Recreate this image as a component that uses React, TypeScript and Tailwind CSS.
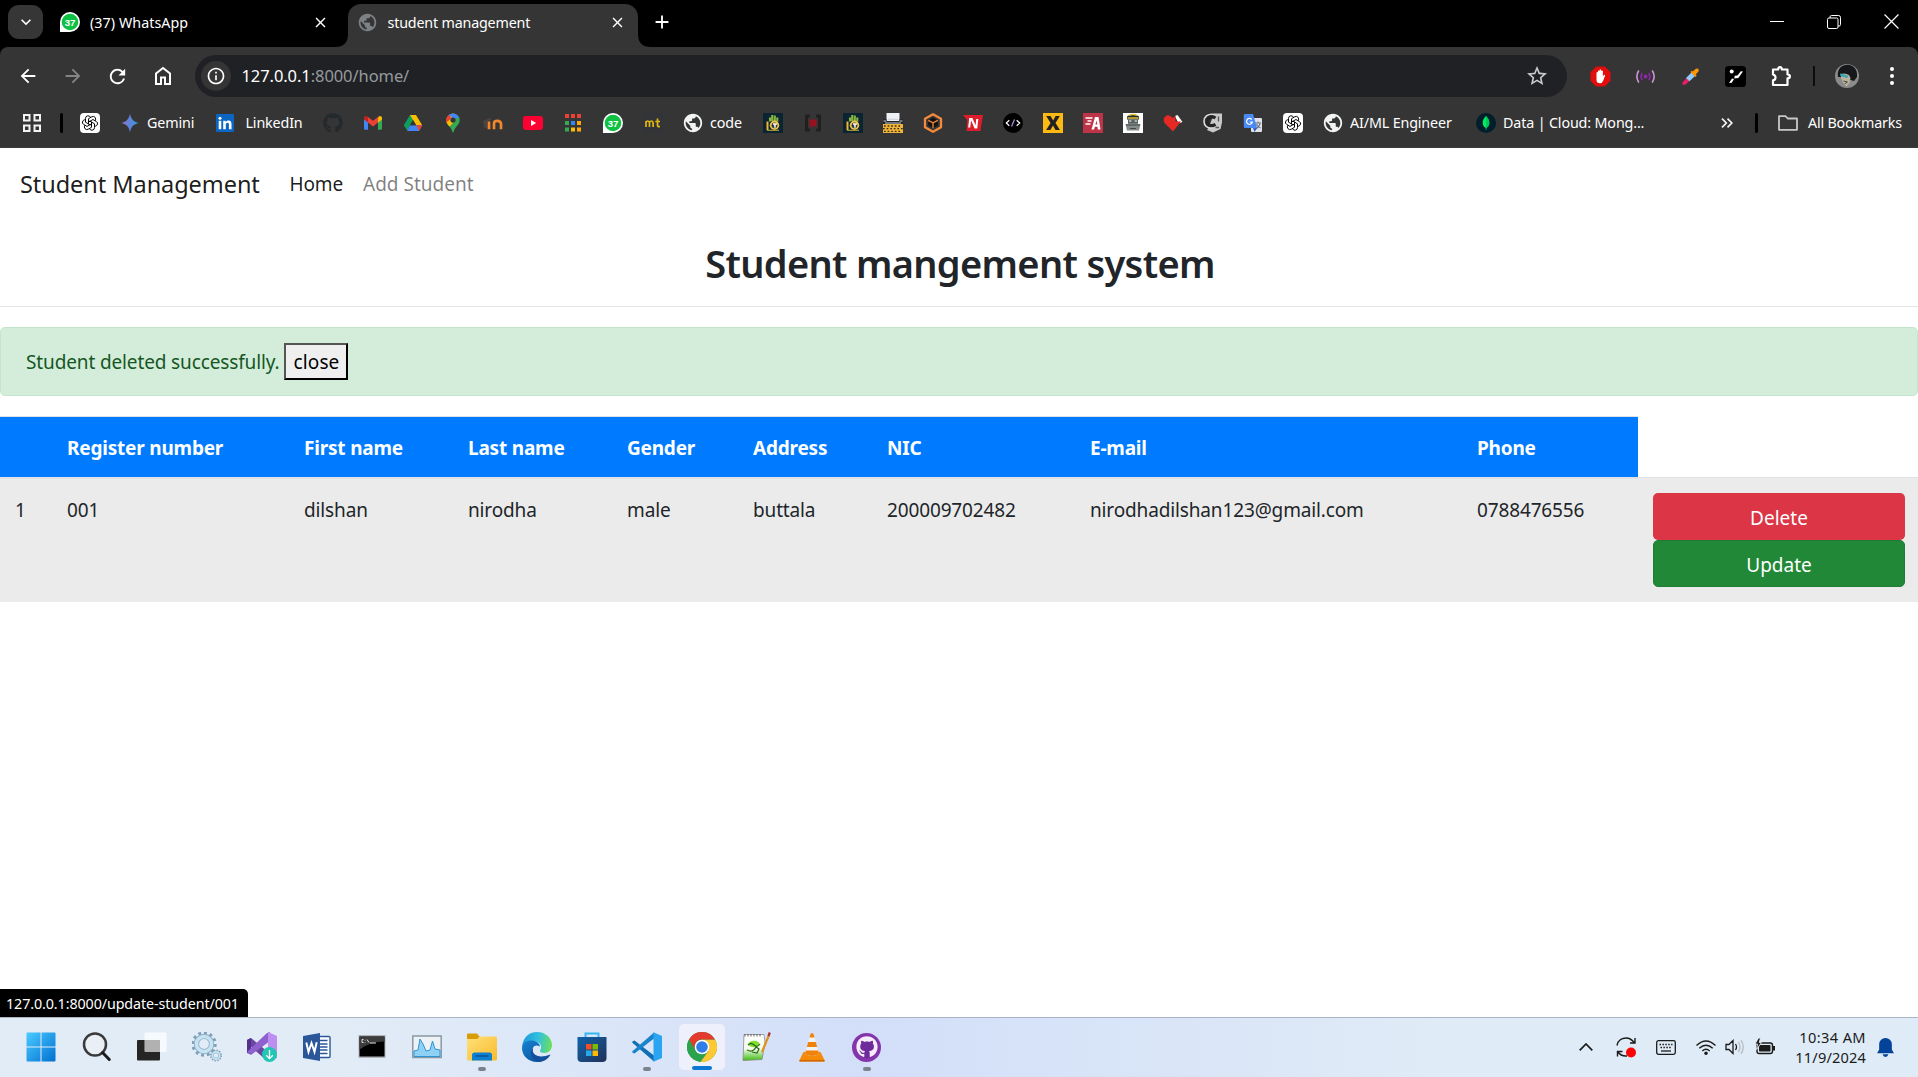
import type { ReactNode } from "react";
import { MdPublic, MdClose, MdAdd, MdArrowBack, MdArrowForward, MdRefresh, MdInfoOutline, MdStarOutline, MdExpandMore } from "react-icons/md";
import { TbBrandOpenai } from "react-icons/tb";
import { FaGithub } from "react-icons/fa";

/* ---------- favicons ---------- */

function WhatsAppBadge() {
  return (
    <svg viewBox="0 0 20 20" className="size-5 shrink-0">
      <path d="M0 20V10A10 10 0 1 1 10 20Z" fill="#fff" />
      <circle cx="10" cy="10" r="8.3" fill="#0fc143" />
      <text x="10" y="13.6" textAnchor="middle" fontSize="9.6" fontWeight="700" fill="#fff" fontFamily="Liberation Sans, sans-serif">37</text>
    </svg>
  );
}

function OpenAI() {
  return (
    <span className="flex size-5 shrink-0 items-center justify-center rounded bg-white text-black">
      <TbBrandOpenai size={18} className="stroke-[1.3]" />
    </span>
  );
}

function Gemini() {
  return (
    <svg viewBox="0 0 20 20" className="size-5 shrink-0">
      <defs>
        <linearGradient id="gem" x1="0" y1="0" x2="1" y2="0">
          <stop offset="0" stopColor="#9a72c4" />
          <stop offset=".5" stopColor="#5b84dc" />
          <stop offset="1" stopColor="#3a9bd8" />
        </linearGradient>
      </defs>
      <path d="M10 .6C10.900 6 13.500 9 18.800 10 13.500 11 10.900 14 10 19.400 9.100 14 6.500 11 1.200 10 6.500 9 9.100 6 10 .6Z" fill="url(#gem)" />
    </svg>
  );
}

function LinkedIn() {
  return (
    <svg viewBox="0 0 20 20" className="size-5 shrink-0">
      <rect x="1" y="1" width="18" height="18" rx="1.3" fill="#0a66c2" />
      <rect x="3.7" y="7.8" width="2.6" height="8.4" fill="#fff" />
      <circle cx="5" cy="5.2" r="1.5" fill="#fff" />
      <path d="M8.2 7.8h2.5V9c.5-.9 1.5-1.5 2.8-1.5 2.6 0 3 1.7 3 4v4.7h-2.6V12c0-1.1 0-2.3-1.4-2.3s-1.7 1.1-1.7 2.3v4.2H8.2Z" fill="#fff" />
    </svg>
  );
}

function Gmail() {
  return (
    <svg viewBox="0 0 20 20" className="size-5 shrink-0">
      <path d="M1 5v10.5c0 .8.6 1.3 1.3 1.3H5V8.6Z" fill="#4285f4" />
      <path d="M15 8.6v8.2h2.7c.7 0 1.3-.5 1.3-1.3V5Z" fill="#34a853" />
      <path d="M15 5v4.6l4-3V5c0-2-2.200-2.700-3.400-1.600Z" fill="#fbbc04" />
      <path d="M5 9.600V4l5 3.800L15 4v5.600l-5 3.800Z" fill="#ea4335" />
      <path d="M1 5v1.600l4 3V4l-.6-.6C3.200 2.300 1 3 1 5Z" fill="#c5221f" />
    </svg>
  );
}

function Drive() {
  return (
    <svg viewBox="0 0 20 20" className="size-5 shrink-0">
      <path d="M7 2h6L7.200 12 4.200 17.500.8 12.300Z" fill="#0f9d58" />
      <path d="M7 2h6l6.200 10.300h-6Z" fill="#fbbc04" />
      <path d="M7 12.300h12.200L16 18H4Z" fill="#4285f4" />
      <path d="M13.200 12.300h6L16 18Z" fill="#ea4335" />
      <path d="M10 7.200l3.100 5.100H7Z" fill="#353535" />
    </svg>
  );
}

function MapsPin() {
  return (
    <svg viewBox="0 0 20 20" className="size-5 shrink-0">
      <defs>
        <clipPath id="pin">
          <path d="M10 .5a6.700 6.700 0 0 1 6.700 6.700c0 3-1.900 4.500-3.600 6.700-1.300 1.700-1.900 3-2.400 4.900-.2.900-1.200.9-1.400 0-.5-1.900-1.100-3.200-2.400-4.900-1.700-2.200-3.600-3.700-3.600-6.700A6.700 6.700 0 0 1 10 .5Z" />
        </clipPath>
      </defs>
      <g clipPath="url(#pin)">
        <rect width="20" height="20" fill="#34a853" />
        <path d="M0 0h12L2 12H0Z" fill="#ea4335" />
        <path d="M6 0h14v4l-6 1-4 2-4-3Z" fill="#4285f4" />
        <path d="M1 11l7-8 3 6-6 6Z" fill="#fbbc04" />
        <path d="M1 2l4-1 3.500 4L3 10Z" fill="#ea4335" />
      </g>
      <circle cx="10" cy="7.100" r="2.600" fill="#353535" />
    </svg>
  );
}

function Moodle() {
  return (
    <svg viewBox="0 0 20 20" className="size-5 shrink-0">
      <path d="M0 8l6-3 3 1-5 3v6H1.500Z" fill="#4a4340" />
      <path d="M6 16.300V8.500M11 16.300V10.500Q11 7.800 14.300 7.800T18 10.500v5.800" fill="none" stroke="#f0872a" strokeWidth="2.700" />
    </svg>
  );
}

function YouTube() {
  return (
    <svg viewBox="0 0 20 20" className="size-5 shrink-0">
      <rect x="0" y="3" width="20" height="14" rx="3" fill="#ff0033" />
      <path d="M8 7l5.200 3L8 13Z" fill="#fff" />
    </svg>
  );
}

function NineDots() {
  return (
    <svg viewBox="0 0 20 20" className="size-5 shrink-0">
      <g fill="#ea4335"><rect x="2" y="1" width="4" height="4" /><rect x="8" y="1" width="4" height="4" /><rect x="14" y="1" width="4" height="4" /></g>
      <rect x="2" y="8" width="4" height="4" fill="#34a853" /><rect x="8" y="8" width="4" height="4" fill="#2f86f6" /><rect x="14" y="8" width="4" height="4" fill="#fbaa05" />
      <rect x="2" y="14.500" width="4" height="4" fill="#34a853" /><rect x="8" y="14.500" width="4" height="4" fill="#fbbc04" /><rect x="14" y="14.500" width="4" height="4" fill="#fbaa05" />
    </svg>
  );
}

function Monkeytype() {
  return (
    <svg viewBox="0 0 20 20" className="size-5 shrink-0">
      <rect width="20" height="20" rx="4" fill="#323437" />
      <path d="M3 14V8M3 9.500q.4-1.500 1.800-1.500T6.500 9.800V14M6.500 9.800q.3-1.800 1.900-1.800t1.700 1.800V14" fill="none" stroke="#e2b714" strokeWidth="1.700" />
      <path d="M14.500 5.500v6.700q0 1.700 2.500 1.300M12.300 8.500h4.700" fill="none" stroke="#e2b714" strokeWidth="1.700" />
    </svg>
  );
}

function CropHand() {
  return (
    <svg viewBox="0 0 20 20" className="size-5 shrink-0">
      <rect width="20" height="20" fill="#0b2434" />
      <path d="M7 8.500V4.500M9.200 8V2M11.800 8V2.500M14.300 8.500V4.500" stroke="#86b83f" strokeWidth="2.100" />
      <path d="M4.500 8.500v8.500" stroke="#f2b632" strokeWidth="2" />
      <circle cx="11.500" cy="12.300" r="4.700" fill="#f0c548" />
      <circle cx="11.500" cy="12.300" r="2.900" fill="#2c3f3c" />
      <path d="M10 10.300h4v1.400h-1.300v3h-1.500v-3H10Z" fill="#fff" />
      <path d="M4 17.300h12" stroke="#a9a438" strokeWidth="1.200" />
    </svg>
  );
}

function BracketSquare() {
  return (
    <svg viewBox="0 0 20 20" className="size-5 shrink-0">
      <path d="M7 3H3.500v14H7M13 3h3.500v14H13" fill="none" stroke="#202020" strokeWidth="3" />
      <rect x="6.500" y="6.500" width="7" height="7" fill="#96121f" />
    </svg>
  );
}

function Typewriter() {
  return (
    <svg viewBox="0 0 20 20" className="size-5 shrink-0">
      <path d="M3.500 0h13v8h-13Z" fill="#eef1f5" />
      <path d="M0 6.500h4V8h12V6.500h4V11H0Z" fill="#1d2027" />
      <path d="M.5 8h3M5 6.300h10M16.500 8h3M2 10h16" stroke="#c9ced6" strokeWidth="1.100" />
      <path d="M0 11h20v9H0Z" fill="#efb43a" />
      <path d="M1 13h18M0 15.700h20M1 18.400h18" stroke="#3c2c12" strokeWidth="1.300" strokeDasharray="1.700 1.900" />
    </svg>
  );
}

function BoxHex() {
  return (
    <svg viewBox="0 0 20 20" className="size-5 shrink-0">
      <path d="M10 1.200l8 4.500v8.600l-8 4.500-8-4.500V5.700Z" fill="#353535" stroke="#f58a3a" strokeWidth="2.300" strokeLinejoin="round" />
      <path d="M10 4.800l4.800 2.500v5.200L10 15.300l-4.800-2.800V7.300Z" fill="#141210" />
      <path d="M5.200 7.300L10 9.800l4.800-2.500M10 9.800v5.500" fill="none" stroke="#f58a3a" strokeWidth="1.300" />
    </svg>
  );
}

function RedN() {
  return (
    <svg viewBox="0 0 20 20" className="size-5 shrink-0">
      <path d="M0 2h20l-2.600 16H3.500l.8-11Z" fill="#dd1d2b" />
      <path d="M6.200 14.500L7.200 6h1.500l3.600 8.500h1L14.300 6" fill="none" stroke="#fff" strokeWidth="2.100" />
    </svg>
  );
}

function CodeCircle() {
  return (
    <svg viewBox="0 0 20 20" className="size-5 shrink-0">
      <circle cx="10" cy="10" r="10" fill="#000" />
      <path d="M6.300 7.300L3.300 10l3 2.700M13.700 7.300l3 2.700-3 2.700" fill="none" stroke="#fff" strokeWidth="1.200" />
      <path d="M11.500 6.500l-3 7" stroke="#b388eb" strokeWidth="1.200" />
    </svg>
  );
}

function YellowX() {
  return (
    <svg viewBox="0 0 20 20" className="size-5 shrink-0">
      <rect width="20" height="20" fill="#fcb813" />
      <path d="M3.200 3h4.300l2.700 4.500L12.600 3h4.200L12.500 10l4.400 7h-4.400L10 12.400 7.400 17H3.100l4.500-7Z" fill="#222" />
    </svg>
  );
}

function SpeedA() {
  return (
    <svg viewBox="0 0 20 20" className="size-5 shrink-0">
      <rect width="20" height="20" fill="#bd3448" />
      <path d="M2.500 5h7M4.500 8h4M2.500 11h5" stroke="#fff" strokeWidth="1.300" />
      <path d="M8.500 16.500L12 4h3.500l2 12.500h-2.700l-.3-2.800h-2.700l-.7 2.800Zm3.800-5h2l-.4-4Z" fill="#fff" fillRule="evenodd" />
    </svg>
  );
}

function HackerCat() {
  return (
    <svg viewBox="0 0 20 20" className="size-5 shrink-0">
      <rect width="20" height="20" fill="#fff" />
      <path d="M4 3.500q6-4.500 12 0v3H4Z" fill="#24282b" />
      <path d="M6 2.500q4-2 8 0M4.500 5h11" stroke="#e0c235" strokeWidth="1.300" fill="none" />
      <path d="M5 6.500h10v4.300H5Z" fill="#55605f" />
      <path d="M6 8h2.500M11.500 8H14" stroke="#fff" strokeWidth="1.200" />
      <path d="M2.500 11h15L16 17.500H4Z" fill="#858c8b" />
      <path d="M3 12h14M7 15.500h6" stroke="#424746" strokeWidth="1.200" />
    </svg>
  );
}

function HeartCard() {
  return (
    <svg viewBox="0 0 20 20" className="size-5 shrink-0">
      <path d="M12 3l2.500-1 5 7-4 1.500Z" fill="#fff" />
      <path d="M10 18.500L2 10.500C-1.500 6.500 3 0 7.500 3.200L10 5l2.500-2v5.500H18Z" fill="#e52a24" />
    </svg>
  );
}

function GrayC() {
  return (
    <svg viewBox="0 0 20 20" className="size-5 shrink-0">
      <path d="M11 .500h8v9L17.500 16 10 19.500l-6-2.500 2-3Z" fill="#c9c9c9" />
      <path d="M11.500 1.500C4 .5 1 4 1 8.500S4.500 15.500 10 15" fill="none" stroke="#dcdcdc" strokeWidth="1.600" />
      <path d="M12.500 5C8.500 2.500 4.300 4.500 4.300 8.700s4.400 5 8.200 2.600" fill="none" stroke="#252525" strokeWidth="3.200" />
      <path d="M15.500 3.500v5M12.500 14.500h3.500" stroke="#555" strokeWidth="1.300" />
    </svg>
  );
}

function Translate() {
  return (
    <svg viewBox="0 0 20 20" className="size-5 shrink-0">
      <rect x="8" y="5" width="11" height="14" rx="1" fill="#dfe3e8" />
      <path d="M12 10h6M15 8.500V10M17 10.500q-1 4-4.500 5M13.500 11q1 3 4 4" stroke="#6d7480" strokeWidth="1.100" fill="none" />
      <path d="M2 1h8l4.200 14H2q-1.200 0-1.200-1.200V2.200Q.8 1 2 1Z" fill="#4a8af4" />
      <path d="M10 15h4.200L11.500 19Z" fill="#3563c4" />
      <path d="M8.700 6.500A2.900 2.900 0 1 0 9.300 9H6.700" fill="none" stroke="#fff" strokeWidth="1.200" />
    </svg>
  );
}

function Mongo() {
  return (
    <svg viewBox="0 0 20 20" className="size-5 shrink-0">
      <circle cx="10" cy="10" r="10" fill="#001e2b" />
      <path d="M10 3c2.200 2.300 3.300 4.300 3.300 6.700 0 2.500-1.200 4.100-3 5.400L10.200 17h-.4l-.1-1.900c-1.800-1.300-3-2.900-3-5.400C6.700 7.300 7.800 5.300 10 3Z" fill="#00ed64" />
      <path d="M10 3v14h.2l.1-1.900c1.800-1.300 3-2.900 3-5.400C13.300 7.300 12.200 5.300 10 3Z" fill="#00c955" />
    </svg>
  );
}

const Globe = () => <MdPublic className="-mx-px size-[22px] shrink-0 text-[#f1f3f4]" />;

function Mark({ icon, label, box }: { icon: ReactNode; label?: string; box?: string }) {
  return (
    <div className={`flex h-5 shrink-0 items-center whitespace-nowrap text-[14.3px] tracking-[-0.14px] text-white ${box ?? "w-5"}`}>
      {icon}
      {label && <span className="pb-px">{label}</span>}
    </div>
  );
}

/* ---------- browser chrome ---------- */

function TabStrip() {
  return (
    <header className="flex h-[47px] shrink-0 items-start bg-black text-white">
      <div className="ml-2 mt-[5px] flex h-[34px] w-[35px] items-center justify-center rounded-[11px] bg-[#363636]">
        <MdExpandMore size={20} />
      </div>
      <div className="ml-[17px] flex h-11 w-[288px] items-center">
        <WhatsAppBadge />
        <span className="ml-2.5 flex-1 pt-px text-[14.3px] tracking-[0.05px]">(37) WhatsApp</span>
        <MdClose size={17} className="mr-[19px]" />
      </div>
      <svg viewBox="0 0 13 43" className="-ml-[13px] mt-1 h-[43px] w-[13px]"><path d="M13 30v13H0Q13 43 13 30Z" fill="#353535" /></svg>
      <div className="mt-1 flex h-[43px] w-[290px] items-center rounded-t-[13px] bg-[#353535] pb-[7px]">
        <MdPublic size={21} className="ml-[9px] text-[#7d8084]" />
        <span className="ml-[9.5px] flex-1 pt-px text-[14.3px] tracking-[-0.18px]">student management</span>
        <MdClose size={17} className="mr-3" />
      </div>
      <svg viewBox="0 0 13 43" className="mt-1 h-[43px] w-[13px]"><path d="M0 30v13h13Q0 43 0 30Z" fill="#353535" /></svg>
      <MdAdd size={22} className="mt-[11px]" />
      <div className="ml-auto mr-[19px] mt-[14px] flex items-center gap-[43px]">
        <svg viewBox="0 0 14 14" className="size-[14px]" stroke="#fff"><path d="M0 6.500h14" /></svg>
        <svg viewBox="0 0 14 14" className="size-[14px]" fill="none" stroke="#fff">
          <rect x=".5" y="3" width="10.500" height="10.500" rx="1.500" />
          <path d="M3 3V2Q3 .5 4.500.5h7Q13.500.5 13.500 2.500v7Q13.500 11 12 11h-1" />
        </svg>
        <svg viewBox="0 0 14 14" className="size-[15px]" stroke="#fff" strokeWidth="1.100"><path d="M.5.5l13 13M13.500.5l-13 13" /></svg>
      </div>
    </header>
  );
}

function Toolbar() {
  return (
    <div className="bg-black">
      <div className="flex h-[58px] items-center rounded-t-lg bg-[#353535] text-white">
        <div className="ml-[17px] flex w-[178px] items-center gap-[22.500px]">
          <MdArrowBack size={22} />
          <MdArrowForward size={22} className="text-[#858585]" />
          <MdRefresh size={23} />
          <svg viewBox="0 0 22 22" className="size-[22px]" fill="none" stroke="#fff" strokeWidth="2"><path d="M4 8.500L11 3l7 5.500V19h-5v-6.500H9V19H4Z" /></svg>
        </div>
        <div className="flex h-[42px] w-[1372px] items-center rounded-full bg-[#202124] pl-[6px]">
          <span className="flex size-[30px] items-center justify-center rounded-full bg-[#353535]"><MdInfoOutline size={20} /></span>
          <span className="ml-[10.500px] flex-1 pt-px text-[16.500px] tracking-[-0.08px] text-[#959a9f]"><span className="text-white">127.0.0.1</span>:8000/home/</span>
          <MdStarOutline size={24} className="mr-[18px] text-[#c9cbcd]" />
        </div>
        <div className="ml-[23px] flex items-center gap-[24px]">
          <svg viewBox="0 0 21 21" className="size-[21px]">
            <path d="M6.200.5h8.600l5.700 5.700v8.600l-5.700 5.700H6.200L.5 14.800V6.200Z" fill="#e40d0d" />
            <path d="M6.500 10V6.500q.7-.8 1.400 0V5q.8-.9 1.600 0V3.700q.9-.9 1.700 0V5q.9-.8 1.700.1v5.200l1-1.300q1.300-.5 1.200.6l-1.800 5q-1 2.700-3.300 2.700Q6.500 17.200 6.500 14Z" fill="#fff" />
          </svg>
          <svg viewBox="0 0 21 21" className="size-[21px]" fill="none" strokeWidth="1.600" strokeLinecap="round">
            <circle cx="10.500" cy="10.500" r="1.900" fill="#9427b0" />
            <path d="M7 7.500q-2 3 0 6M14 7.500q2 3 0 6" stroke="#8e24aa" />
            <path d="M3.500 5q-3.300 5.500 0 11M17.500 5q3.300 5.500 0 11" stroke="#ce93d8" />
          </svg>
          <svg viewBox="0 0 21 21" className="size-[21px]">
            <path d="M2.500 16.500l4-4.500 3 3-4 3.500-3 .5Z" fill="#e91e63" />
            <path d="M6 12l5.500-5.500 3.500 3.500-5.500 5.300Z" fill="#90caf9" />
            <path d="M10.500 6l1.300-1.300 1 .7L15.500 3Q18 1.700 18.800 4q.2 1-.6 1.700L15.700 8.500l1 1L15.500 11Z" fill="#ff9800" />
          </svg>
          <svg viewBox="0 0 21 21" className="size-[21px]">
            <rect width="21" height="21" rx="3.500" fill="#000" />
            <circle cx="6.700" cy="5.600" r="2" fill="#fff" />
            <path d="M4 17l2.800-.3L9 13l-2-.5ZM9.300 12.500l4-.6L18 5.500l-2.200-.3-3.300 4.200-2.800.4Z" fill="#fff" />
          </svg>
          <svg viewBox="0 0 22 22" className="size-[22px]" fill="none" stroke="#fff" strokeWidth="2.200" strokeLinejoin="round">
            <path d="M3 4.500h5.200q0-2.400 1.800-2.400t1.800 2.400H17.500v5q2.400 0 2.400 1.900t-2.400 1.900V20H3v-4.600q2.500-.5 2.500-2.900T3 9.500Z" />
          </svg>
        </div>
        <span className="ml-[21px] h-[20px] w-[2px] bg-[#0c0c0c]" />
        <svg viewBox="0 0 24 24" className="ml-[20px] size-6">
          <circle cx="12" cy="12" r="12" fill="#8b8b8b" />
          <path d="M3 13C1.500 4 8 .5 13 .8S23 5 22 13l-3 4L5 13Z" fill="#15171a" />
          <path d="M6 10q4-1.500 8 1l1.500 3-1 5-3 3.500-3-3L6 14Z" fill="#b9b39c" />
          <path d="M5 9.500l4 .8 4.500 1.700-1.500 2.200-3-1.200-3.500-.8Z" fill="#3fa6b5" />
          <path d="M8.500 17l4 1M9.500 20l3-2" stroke="#4a4a40" />
        </svg>
        <svg viewBox="0 0 6 24" className="ml-[30px] h-6 w-[6px]" fill="#fff"><circle cx="3" cy="5" r="2" /><circle cx="3" cy="12" r="2" /><circle cx="3" cy="19" r="2" /></svg>
      </div>
    </div>
  );
}

function Bookmarks() {
  return (
    <div className="flex h-[43px] shrink-0 items-center border-b border-[#3c3c3c] bg-[#353535] pb-[6px] text-white">
      <svg viewBox="0 0 20 20" className="ml-[22px] size-5" fill="none" stroke="#f1f3f4" strokeWidth="2"><path d="M2 2h5.500v5.500H2ZM12.500 2H18v5.500h-5.500ZM2 12.500h5.500V18H2ZM12.500 12.500H18V18h-5.500Z" /></svg>
      <span className="ml-[18px] mr-[17px] h-5 w-[3px] rounded bg-black" />
      <div className="flex gap-5">
        <Mark icon={<OpenAI />} />
        <Mark icon={<Gemini />} label="Gemini" box="w-[75px] gap-[7px]" />
        <Mark icon={<LinkedIn />} label="LinkedIn" box="w-[88px] gap-[10.500px]" />
        <Mark icon={<FaGithub size={20} className="text-[#24292e]" />} />
        <Mark icon={<Gmail />} />
        <Mark icon={<Drive />} />
        <Mark icon={<MapsPin />} />
        <Mark icon={<Moodle />} />
        <Mark icon={<YouTube />} />
        <Mark icon={<NineDots />} />
        <Mark icon={<WhatsAppBadge />} />
        <Mark icon={<Monkeytype />} />
        <Mark icon={<Globe />} label="code" box="w-[60px] gap-[7px]" />
        <Mark icon={<CropHand />} />
        <Mark icon={<BracketSquare />} />
        <Mark icon={<CropHand />} />
        <Mark icon={<Typewriter />} />
        <Mark icon={<BoxHex />} />
        <Mark icon={<RedN />} />
        <Mark icon={<CodeCircle />} />
        <Mark icon={<YellowX />} />
        <Mark icon={<SpeedA />} />
        <Mark icon={<HackerCat />} />
        <Mark icon={<HeartCard />} />
        <Mark icon={<GrayC />} />
        <Mark icon={<Translate />} />
        <Mark icon={<OpenAI />} />
        <Mark icon={<Globe />} label="AI/ML Engineer" box="w-[133px] gap-[7px]" />
        <Mark icon={<Mongo />} label="Data | Cloud: Mong..." box="w-[170px] gap-[7px]" />
      </div>
      <svg viewBox="0 0 12 10" className="ml-[75px] h-[10px] w-3" fill="none" stroke="#f1f3f4" strokeWidth="1.700"><path d="M1 .7L5.300 5 1 9.300M6.500.7L10.800 5 6.500 9.300" /></svg>
      <span className="ml-[22px] h-5 w-[3px] rounded bg-black" />
      <svg viewBox="0 0 20 16" className="ml-5 h-4 w-5" fill="none" stroke="#c7c7c7" strokeWidth="1.800"><path d="M1 1.200h6.500L9.700 3.500H19V14.800H1Z" strokeLinejoin="round" /></svg>
      <span className="ml-[10px] whitespace-nowrap pb-px text-[14.3px] tracking-[-0.18px]">All Bookmarks</span>
    </div>
  );
}

/* ---------- web page ---------- */

const columns = ["", "Register number", "First name", "Last name", "Gender", "Address", "NIC", "E-mail", "Phone"];
const students = [["1", "001", "dilshan", "nirodha", "male", "buttala", "200009702482", "nirodhadilshan123@gmail.com", "0788476556"]];

function Page() {
  return (
    <main className="relative flex-1 overflow-hidden bg-white text-[19px] leading-[30px] tracking-[-0.14px] text-[#212529]">
      <nav className="flex h-[72px] items-center pl-5">
        <span className="w-[269.500px] text-[23.500px] tracking-[-0.06px] text-black/90">Student Management</span>
        <a className="mr-[21px] w-[52.500px] text-black/90">Home</a>
        <a className="tracking-normal text-black/50">Add Student</a>
      </nav>
      <h2 className="mt-[19px] h-12 pl-[2px] text-center text-[38px] font-semibold leading-[48px] tracking-[-0.68px]">Student mangement system</h2>
      <hr className="mb-5 mt-[19px] border-black/10" />
      <div className="flex h-[69px] items-center rounded-[5px] border border-[#c3e6cb] bg-[#d4edda] pl-[25px] text-[#155724]">
        <span className="w-[258px] tracking-[-0.13px]">Student deleted successfully.</span>
        <button className="h-[37px] w-16 border-2 border-b-black border-l-[#555] border-r-black border-t-[#555] bg-[#efefef] pl-px leading-[30px] tracking-[0.1px] text-black">close</button>
      </div>
      <table className="mt-5 w-[1918px] table-fixed border-separate border-spacing-0 text-left">
        <colgroup>
          <col className="w-[52px]" /><col className="w-[237px]" /><col className="w-[164px]" /><col className="w-[159px]" /><col className="w-[126px]" />
          <col className="w-[134px]" /><col className="w-[203px]" /><col className="w-[387px]" /><col className="w-[176px]" /><col className="w-[280px]" />
        </colgroup>
        <thead>
          <tr className="h-[61px]">
            {columns.map((c) => (
              <th key={c} className="border-t border-[#dee2e6] bg-[#007bff] pb-[14px] pl-[15px] pt-4 align-top font-bold tracking-[-0.2px] text-white">{c}</th>
            ))}
          </tr>
        </thead>
        <tbody>
          {students.map((s) => (
            <tr key={s[1]} className="h-[125px] bg-[#ebebeb]">
              {s.map((v, i) => (
                <td key={i} className="border-t-2 border-[#dee2e6] pl-[15px] pt-4 align-top">{v}</td>
              ))}
              <td className="border-t border-[#dee2e6] pl-[15px] pr-[13px] pt-[15px] align-top tracking-normal">
                <button className="block h-[47px] w-full rounded-[5px] bg-[#dc3545] pt-[3px] text-white">Delete</button>
                <button className="block h-[47px] w-full rounded-[5px] border border-[#1e7e34] bg-[#218838] pt-[3px] text-white">Update</button>
              </td>
            </tr>
          ))}
        </tbody>
      </table>
      <div className="absolute bottom-0 left-0 flex h-7 w-[248px] items-center rounded-tr-[5px] bg-black pl-[6px] pt-0.5 text-[14.3px] tracking-[-0.1px] text-white">127.0.0.1:8000/update-student/001</div>
    </main>
  );
}

/* ---------- taskbar ---------- */

function Pinned({ children, state }: { children: ReactNode; state?: "open" | "active" }) {
  return (
    <div className="flex w-[55px] justify-center">
      <div className={`relative flex size-12 items-center justify-center rounded-md ${state === "active" ? "border border-[#dde3f2] bg-[#eef1fb]" : ""}`}>
        {children}
        {state === "open" && <span className="absolute bottom-0 left-5 h-1 w-2 rounded-full bg-[#7c828c]" />}
        {state === "active" && <span className="absolute bottom-0 left-[13px] h-1 w-5 rounded-full bg-[#0a78d4]" />}
      </div>
    </div>
  );
}

function Gear({ cx, cy, r }: { cx: number; cy: number; r: number }) {
  return (
    <g transform={`translate(${cx} ${cy})`}>
      <circle r={r} fill="none" stroke="#7f9fba" strokeWidth={r * 0.42} strokeDasharray={`${r * 0.26} ${r * 0.26}`} />
      <circle r={r * 0.72} fill="none" stroke="#8eabc4" strokeWidth={r * 0.5} />
      <circle r={r * 0.72} fill="none" stroke="#c5e3f1" strokeWidth={r * 0.34} />
    </g>
  );
}

function Taskbar() {
  return (
    <footer className="flex h-[60px] shrink-0 items-center border-t border-[#a9b4c4] bg-linear-to-r from-[#e2ecf7] from-18% via-[#d3dff9] via-45% to-[#dfebf6] to-75% pb-px text-[#1b1b1b]">
      <div className="ml-[14px] flex">
        <Pinned>
          <svg viewBox="0 0 30 30" className="-ml-[2px] size-[30px]">
            <defs><linearGradient id="win" x1="0" y1="0" x2="1" y2="1"><stop offset="0" stopColor="#4ccbff" /><stop offset="1" stopColor="#0070d2" /></linearGradient></defs>
            <path d="M.5 1.500q0-1 1-1h13v14H.5ZM15.500.5h13q1 0 1 1v13h-14ZM.5 15.500h14v14h-13q-1 0-1-1ZM15.500 15.500h14v13q0 1-1 1h-13Z" fill="url(#win)" />
          </svg>
        </Pinned>
        <Pinned>
          <svg viewBox="0 0 30 30" className="size-[30px]" fill="none" strokeLinecap="round">
            <circle cx="13" cy="12.500" r="11" fill="#eef1f5" fillOpacity=".7" stroke="#3a3a3a" strokeWidth="2.500" />
            <path d="M20.500 20.500l6.800 7" stroke="#1c1c1c" strokeWidth="3" />
          </svg>
        </Pinned>
        <Pinned>
          <svg viewBox="0 0 30 30" className="size-[30px]">
            <rect x="0" y="8" width="23" height="20.500" rx="1" fill="#252525" />
            <rect x="7.500" y=".5" width="22" height="19.500" rx="1" fill="#fff" fillOpacity=".72" />
            <rect x="8" y="8" width="15" height="12" fill="#aaa" fillOpacity=".7" />
          </svg>
        </Pinned>
        <Pinned>
          <svg viewBox="0 0 30 30" className="size-[30px]"><Gear cx={12} cy={12} r={10.500} /><Gear cx={24} cy={23.500} r={5} /></svg>
        </Pinned>
        <Pinned>
          <svg viewBox="0 0 30 30" className="size-[30px]">
            <path d="M0 8l4-2 17 14v8.500L19 28 4 15v5l-4-2Z" fill="#6c46a3" />
            <path d="M0 21V8l4-2v16.500Z" fill="#52308c" />
            <path d="M0 20l20-19 3-1v9L4 23Z" fill="#8f61d0" />
            <path d="M21 0l9 4v22l-9 3Z" fill="#bd8df2" />
            <circle cx="22.500" cy="22.500" r="7.500" fill="#22c7b4" />
            <path d="M22.500 18v8.500m-3.300-3.200l3.300 3.300 3.300-3.300" fill="none" stroke="#fff" strokeWidth="1.300" />
          </svg>
        </Pinned>
        <Pinned>
          <svg viewBox="0 0 30 30" className="size-[30px]">
            <rect x="14" y="4.500" width="14" height="21" rx="1" fill="#fff" stroke="#2b579a" strokeWidth="1.400" />
            <path d="M17 8.500h8.500M17 12h8.500M17 15h8.500M17 18h8.500M17 21.500h8.500" stroke="#2b579a" strokeWidth="1.300" />
            <path d="M1 4l17-3v28L1 26Z" fill="#2b579a" />
            <path d="M4.300 10.500l2.200 9.300L9.500 11l3 8.800 2.200-9.500" fill="none" stroke="#fff" strokeWidth="2" />
          </svg>
        </Pinned>
        <Pinned>
          <svg viewBox="0 0 30 30" className="size-[30px]">
            <rect x="1.500" y="3" width="27" height="23" fill="#b0b3b8" />
            <rect x="2.500" y="4.500" width="25" height="20" fill="#000" />
            <path d="M2.500 4.500h25v5q-14 0-25 8Z" fill="#3c3c3c" />
            <path d="M6.500 7.500H5v3h1.500M8 8v.5M8 10v.5M10 7.500l2 3M13 11h6" fill="none" stroke="#ddd" strokeWidth="1" />
          </svg>
        </Pinned>
        <Pinned>
          <svg viewBox="0 0 30 30" className="size-[30px]">
            <rect x=".8" y="4" width="28.400" height="21.500" fill="#edf2f6" stroke="#8b98a3" strokeWidth="1.500" />
            <path d="M2 19l4-1 2-11 3 5 3 7 4-1 2.500-9L23 17l5 1v6.500H2Z" fill="#8fd0f5" stroke="#2d95d4" strokeWidth="1" />
          </svg>
        </Pinned>
        <Pinned state="open">
          <svg viewBox="0 0 30 30" className="size-[30px]">
            <defs><linearGradient id="fold" x1="0" y1="0" x2="1" y2="1"><stop offset="0" stopColor="#ffe07a" /><stop offset="1" stopColor="#f9bb2c" /></linearGradient></defs>
            <path d="M0 2.500q0-1 1-1h9l2.500 3v6H0Z" fill="#d99c08" />
            <path d="M0 7h10l3-2.500h16q1 0 1 1V27q0 1.500-1.500 1.500H1.500Q0 28.500 0 27Z" fill="url(#fold)" />
            <path d="M5 28.500V23q0-2.500 2.500-2.500h15Q25 20.500 25 23v5.500Z" fill="#0f7fd0" />
            <path d="M9 24h12" stroke="#07569a" strokeWidth="1.400" strokeLinecap="round" />
          </svg>
        </Pinned>
        <Pinned>
          <svg viewBox="0 0 30 30" className="size-[30px]">
            <defs>
              <linearGradient id="eg1" x1="0" y1=".3" x2="1" y2=".4"><stop offset="0" stopColor="#1a97d8" /><stop offset=".55" stopColor="#34c1dd" /><stop offset="1" stopColor="#6be05a" /></linearGradient>
              <linearGradient id="eg2" x1="0" y1="0" x2=".6" y2="1"><stop offset="0" stopColor="#1680cf" /><stop offset="1" stopColor="#0c59a4" /></linearGradient>
            </defs>
            <path d="M.4 12.500C2 4.500 8 0 15 0c9 0 15 6.500 15 13 0 5-3.500 8-7.500 8-3.500 0-5-1.200-4.500-2.300 2.500-3.500 1-9.200-5.500-9.200C7 9.500 1.500 12 0 16Z" fill="url(#eg1)" />
            <path d="M0 16C.5 11.500 4 8.500 9 8.500c5 0 8.500 2.500 9 6-5-3-9 1-7 6.500 2 5.500 8 8 12 7-2.500 1.500-5 2-8 2C6 30 0 23.500 0 16Z" fill="url(#eg2)" />
            <path d="M11 16c-2 7 6 11 17.500 6.500C26 27.500 21 30 16.500 29.800 10 28.500 6.500 20 11 16Z" fill="#124f9c" />
          </svg>
        </Pinned>
        <Pinned>
          <svg viewBox="0 0 30 30" className="size-[30px]">
            <defs><linearGradient id="store" x1="0" y1="0" x2="1" y2="1"><stop offset="0" stopColor="#0f63ab" /><stop offset="1" stopColor="#223157" /></linearGradient></defs>
            <path d="M8.500 6V1.500h13V6" fill="none" stroke="#35b8f1" strokeWidth="2" />
            <path d="M.5 5h29v21q0 4-4 4h-21q-4 0-4-4Z" fill="url(#store)" />
            <rect x="9" y="12" width="5.500" height="5.500" fill="#f25022" /><rect x="15.500" y="12" width="5.500" height="5.500" fill="#7fba00" />
            <rect x="9" y="18.500" width="5.500" height="5.500" fill="#28a8ea" /><rect x="15.500" y="18.500" width="5.500" height="5.500" fill="#ffb900" />
          </svg>
        </Pinned>
        <Pinned state="open">
          <svg viewBox="0 0 30 30" className="size-[30px]">
            <path d="M2.500 8.500L22 23.500v6L.7 11Q-.3 10 .7 9.200Z" fill="#0f6fb5" />
            <path d="M2.500 21.500L22 6.500v-6L.7 19Q-.3 20 .7 20.800Z" fill="#1884cc" />
            <path d="M21.500.2L30 4v22l-8.500 3.800Z" fill="#2ba4f2" />
          </svg>
        </Pinned>
        <Pinned state="active">
          <svg viewBox="0 0 30 30" className="size-[30px]">
            <circle cx="15" cy="15" r="15" fill="#2ba24c" />
            <path d="M15 7.500h13A15 15 0 0 1 15 30l-1.500-.1L21.500 19Z" fill="#fcc934" />
            <path d="M2 7.500A15 15 0 0 1 28 7.500H15A7.500 7.500 0 0 0 8.500 18.700Z" fill="#e33b2e" />
            <path d="M2 7.500l6.500 11.200Q11 23 16 22.400L13.500 29.900A15 15 0 0 1 2 7.500Z" fill="#2ba24c" />
            <circle cx="15" cy="15" r="7.300" fill="#fff" />
            <circle cx="15" cy="15" r="5.800" fill="#2f7de9" />
          </svg>
        </Pinned>
        <Pinned>
          <svg viewBox="0 0 30 30" className="size-[30px]">
            <defs><linearGradient id="npp" x1="0" y1="0" x2="0" y2="1"><stop offset="0" stopColor="#fff" /><stop offset=".55" stopColor="#f4faee" /><stop offset="1" stopColor="#3fbd10" /></linearGradient></defs>
            <path d="M2 2.500h20L23 10l-3 17.500-19 1Z" fill="url(#npp)" stroke="#888" strokeWidth=".8" />
            <path d="M3 2v2.500M6 2v2.500M9 2v2.500M12 2v2.500M15 2v2.500M18 2v2.500" stroke="#555" strokeWidth=".9" />
            <ellipse cx="12" cy="12" rx="5.500" ry="3.200" fill="#7fe02f" />
            <path d="M6 13q3-3 6 0t6-1M5 18q6 3 9-3l3 2-2 4-5-1" fill="none" stroke="#2b6b10" strokeWidth="1.200" />
            <path d="M20 20l7-17" stroke="#e0921f" strokeWidth="2.200" /><path d="M26.500 4l1.300-3.500" stroke="#a83232" strokeWidth="2.200" />
          </svg>
        </Pinned>
        <Pinned>
          <svg viewBox="0 0 30 30" className="size-[30px]">
            <path d="M6.500 20h17L27.500 28v1.500h-25V28Z" fill="#f48a08" />
            <path d="M13.500 2q1.500-2 3 0l5.500 20q-7 4-14 0Z" fill="#f2f2f2" />
            <path d="M13.500 2q1.500-2 3 0l1 3.500h-5ZM11.200 10h7.600l1.400 5H9.800ZM8.800 18.500h12.400l.8 3.500q-7 4-14 0Z" fill="#f0820c" />
            <path d="M2.500 28h25v1.500h-25Z" fill="#ce6604" />
          </svg>
        </Pinned>
        <Pinned state="open">
          <span className="flex size-[29px] items-center justify-center rounded-full bg-[#8534ac]">
            <span className="flex size-[22px] items-center justify-center rounded-full bg-[#6e2a9a]"><FaGithub size={22} className="text-[#f7ecfb]" /></span>
          </span>
        </Pinned>
      </div>
      <div className="ml-auto mr-6 flex items-center">
        <svg viewBox="0 0 14 8" className="mr-[22px] h-2 w-[14px]" fill="none" stroke="#1b1b1b" strokeWidth="1.700"><path d="M.7 7.300L7 1l6.300 6.300" /></svg>
        <svg viewBox="0 0 22 22" className="mr-[19px] size-[22px]" fill="none" stroke="#1b1b1b" strokeWidth="1.400">
          <path d="M2 9.500C3 4 7.500 2 11 2q5 0 8.500 5M20 2v5h-5M2.500 20.500v-5h5M2.500 15.500Q6 20.500 12 20" />
          <circle cx="16" cy="16.500" r="5" fill="#f80606" stroke="none" />
        </svg>
        <svg viewBox="0 0 20 15" className="mr-[20px] h-[15px] w-5" fill="none" stroke="#1b1b1b" strokeWidth="1.300">
          <rect x=".7" y=".7" width="18.600" height="13.600" rx="1.800" />
          <path d="M3.500 4.500h13M4.500 7.500h11" strokeDasharray="1.500 1.400" /><path d="M5 11h10" />
        </svg>
        <svg viewBox="0 0 20 15" className="mr-[9px] h-[15px] w-5" fill="none" stroke="#1b1b1b" strokeWidth="1.400">
          <path d="M.5 5.500Q10-3.500 19.500 5.500M3.300 8.300q6.700-6.200 13.400 0M6.300 11q3.700-3.300 7.400 0" /><circle cx="10" cy="13.200" r="1.700" fill="#1b1b1b" stroke="none" />
        </svg>
        <svg viewBox="0 0 20 16" className="mr-[10px] h-4 w-5" fill="none" stroke="#1b1b1b" strokeWidth="1.300">
          <path d="M1 5.500h3L8 1.500v13l-4-4H1ZM10.500 5q2 3 0 6" /><path d="M13.500 3q3 5 0 10M16 1q4.500 7 0 14" stroke="#b3bbc4" />
        </svg>
        <svg viewBox="0 0 20 18" className="mr-[20px] h-[18px] w-5">
          <rect x="2" y="5" width="15.500" height="10.500" rx="2.200" fill="none" stroke="#1b1b1b" strokeWidth="1.400" /><rect x="4" y="7" width="11.500" height="6.500" rx=".8" fill="#1b1b1b" /><path d="M18 8h2v4.500h-2Z" fill="#1b1b1b" />
          <path d="M3.500 0L0 6h2.500L1.500 11.500 6.500 4.500H4.200L5.500 0Z" fill="#1b1b1b" stroke="#dfebf6" strokeWidth=".9" />
        </svg>
        <div className="mr-[11px] text-right text-[14.600px] leading-5">
          <div className="tracking-[0.4px]">10:34 AM</div>
          <div className="tracking-[0.15px]">11/9/2024</div>
        </div>
        <svg viewBox="0 0 16 18" className="h-[19px] w-[17px]" fill="#04439a"><path d="M8 0a6 6 0 0 1 6 6v5l2 3.500H0L2 11V6A6 6 0 0 1 8 0ZM5.300 15.500h5.400q-.5 2.500-2.700 2.500T5.300 15.500Z" /></svg>
      </div>
    </footer>
  );
}

export default function App() {
  return (
    <div className="flex h-[1077px] w-[1918px] flex-col overflow-hidden font-['Noto_Sans',sans-serif]">
      <TabStrip />
      <Toolbar />
      <Bookmarks />
      <Page />
      <Taskbar />
    </div>
  );
}
